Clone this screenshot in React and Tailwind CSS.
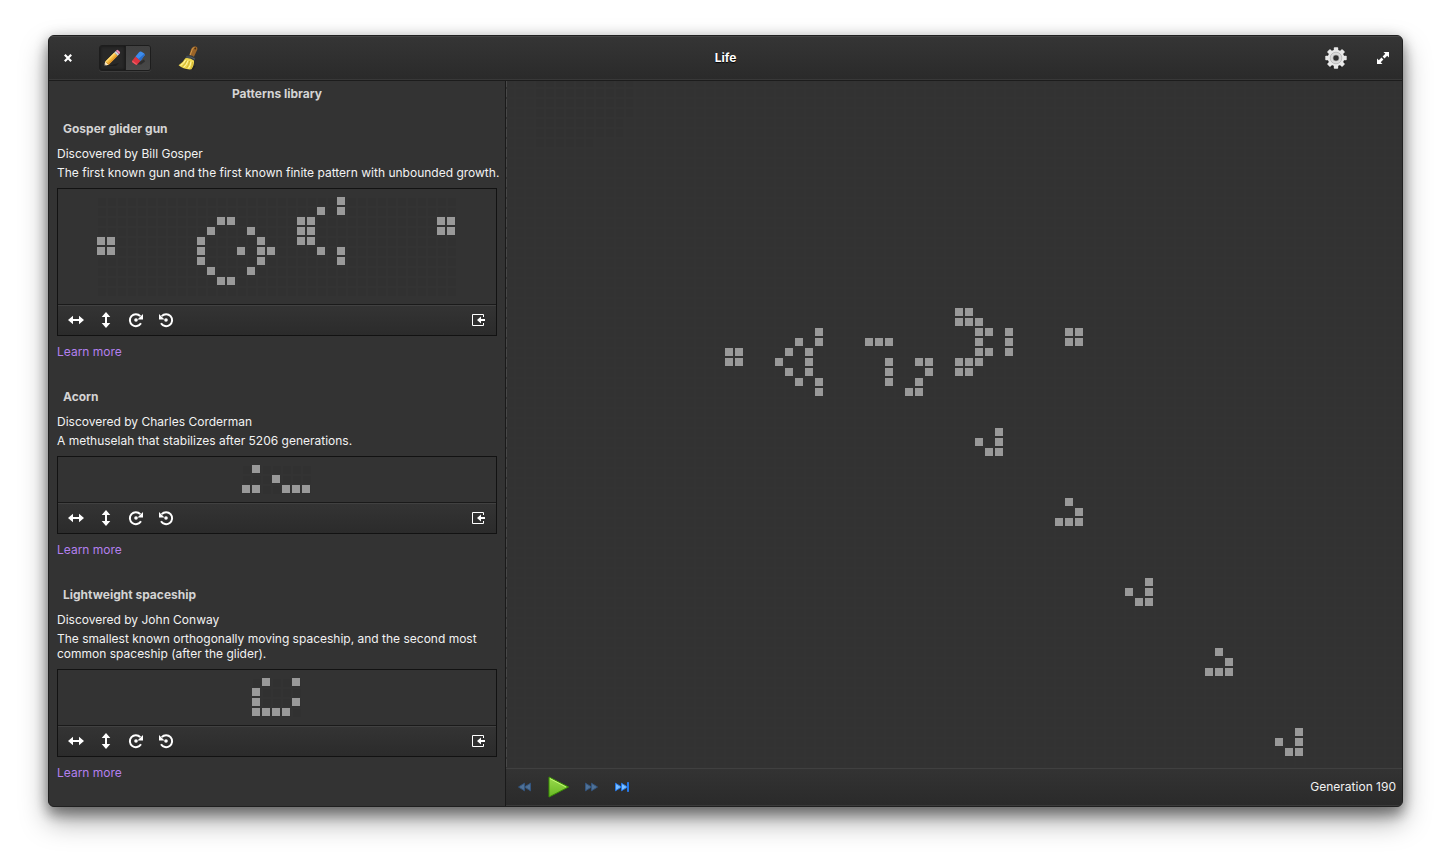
import { useState } from "react";

const CELL = 10;

const patterns = [
  {
    name: "Gosper glider gun",
    author: "Bill Gosper",
    text: "The first known gun and the first known finite pattern with unbounded growth.",
    cols: 36,
    cells: [
      [24],
      [22, 24],
      [12, 13, 20, 21, 34, 35],
      [11, 15, 20, 21, 34, 35],
      [0, 1, 10, 16, 20, 21],
      [0, 1, 10, 14, 16, 17, 22, 24],
      [10, 16, 24],
      [11, 15],
      [12, 13],
      [],
    ],
  },
  {
    name: "Acorn",
    author: "Charles Corderman",
    text: "A methuselah that stabilizes after 5206 generations.",
    cols: 7,
    cells: [[1], [3], [0, 1, 4, 5, 6]],
  },
  {
    name: "Lightweight spaceship",
    author: "John Conway",
    text: "The smallest known orthogonally moving spaceship, and the second most common spaceship (after the glider).",
    cols: 5,
    cells: [[1, 4], [0], [0, 4], [0, 1, 2, 3]],
  },
];

// Live cells of the board: row number, then the columns that are alive.
const board = [
  [23, [45, 46]],
  [24, [45, 46, 47]],
  [25, [31, 47, 48, 50, 56, 57]],
  [26, [29, 31, 36, 37, 38, 47, 50, 56, 57]],
  [27, [22, 23, 28, 30, 47, 48, 50]],
  [28, [22, 23, 27, 30, 38, 41, 42, 45, 46, 47]],
  [29, [28, 30, 38, 42, 45, 46]],
  [30, [29, 31, 38, 41]],
  [31, [31, 40, 41]],
  [35, [49]],
  [36, [47, 49]],
  [37, [48, 49]],
  [42, [56]],
  [43, [57]],
  [44, [55, 56, 57]],
  [50, [64]],
  [51, [62, 64]],
  [52, [63, 64]],
  [57, [71]],
  [58, [72]],
  [59, [70, 71, 72]],
  [65, [79]],
  [66, [77, 79]],
  [67, [78, 79]],
];

function Preview({ cols, cells }) {
  const width = cols * CELL;
  const height = cells.length * CELL;
  return (
    <svg width={width} height={height} viewBox={`0 0 ${width} ${height}`} className="block" aria-hidden="true">
      {cells.map((row, y) =>
        Array.from({ length: cols }, (_, x) => (
          <rect key={`${x}-${y}`} x={x * CELL + 1} y={y * CELL + 1} width="8" height="8" fill="#313131" />
        ))
      )}
      {cells.map((row, y) =>
        row.map((x) => <rect key={`${x}-${y}`} x={x * CELL} y={y * CELL} width="8" height="8" fill="#999999" />)
      )}
    </svg>
  );
}

function Board() {
  return (
    <svg className="block min-h-0 min-w-0 flex-1" aria-label="Board" role="img">
      <defs>
        <pattern id="grid" x="-1" y="-3" width="10" height="10" patternUnits="userSpaceOnUse">
          <rect x="1" y="1" width="8" height="8" fill="#323232" />
        </pattern>
        <pattern id="trail" x="-1" y="-3" width="10" height="10" patternUnits="userSpaceOnUse">
          <rect x="1" y="1" width="8" height="8" fill="#313131" />
        </pattern>
        <pattern id="edge" x="0" y="-3" width="10" height="10" patternUnits="userSpaceOnUse">
          <rect x="0" y="1" width="1" height="8" fill="#484848" />
        </pattern>
      </defs>
      <rect width="100%" height="100%" fill="url(#grid)" />
      <path d="M29 0h98v37h-10v20h-30v10H29z" fill="url(#trail)" />
      <rect width="1" height="100%" fill="url(#edge)" />
      {board.map(([y, row]) =>
        row.map((x) => (
          <rect key={`${x}-${y}`} x={x * CELL - 1} y={y * CELL - 3} width="8" height="8" fill="#999999" />
        ))
      )}
    </svg>
  );
}

function FlipHorizontalIcon() {
  return (
    <svg width="16" height="16" viewBox="0 0 16 16" fill="#fff" aria-hidden="true">
      <path d="M0 8l5-4.300V7h6V3.700L16 8l-5 4.300V9H5v3.300z" />
    </svg>
  );
}

function FlipVerticalIcon() {
  return (
    <svg width="16" height="16" viewBox="0 0 16 16" fill="#fff" aria-hidden="true">
      <path d="M8 0l4.300 5H9v6h3.300L8 16l-4.300-5H7V5H3.700z" />
    </svg>
  );
}

function RotateIcon({ flipped }) {
  return (
    <svg width="16" height="16" viewBox="0 0 16 16" aria-hidden="true">
      <g transform={flipped ? "translate(16 0) scale(-1 1)" : undefined}>
        <path d="M12.300 4.100A6 6 0 1 0 13 11.300" fill="none" stroke="#fff" strokeWidth="2" />
        <path d="M15 2v5.500H9.500z" fill="#fff" />
        <circle cx="8" cy="8" r="1.800" fill="#fff" />
      </g>
    </svg>
  );
}

function InsertIcon() {
  return (
    <svg width="16" height="16" viewBox="0 0 16 16" aria-hidden="true">
      <path d="M13.500 5V2.500h-11v11h11V11" fill="none" stroke="#fff" />
      <path d="M7 8l4-3.500V7h4v2h-4v2.500z" fill="#fff" />
    </svg>
  );
}

function PencilIcon() {
  return (
    <svg width="24" height="24" viewBox="0 0 24 24" aria-hidden="true">
      <path d="M7 20l12-3-3 3z" fill="#111" opacity=".5" />
      <path d="M4 20l1.300-4.600 3.300 3.300z" fill="#fbe6bd" />
      <path d="M4 20l.6-1.900 1.400 1.400z" fill="#2b2b2b" />
      <path d="M5.300 15.400L14.300 6.400l3.300 3.300-9 9z" fill="#f7b83a" />
      <path d="M5.300 15.400l9-9 1.100 1.100-9 9z" fill="#ffd974" />
      <path d="M7.600 17.700l9-9 1 1-9 9z" fill="#e0962a" />
      <path d="M14.300 6.400l1.500-1.500 3.300 3.300-1.500 1.500z" fill="#cfd3d6" />
      <path d="M15.800 4.900l.7-.7q.9-.7 1.700 0l1.600 1.600q.7.900 0 1.700l-.7.700z" fill="#f08bb0" />
    </svg>
  );
}

function EraserIcon() {
  return (
    <svg width="24" height="24" viewBox="0 0 24 24" aria-hidden="true">
      <path d="M9 18.500l9-5 1 2-4 3z" fill="#161616" opacity=".5" />
      <path d="M9.500 10.500l5 4.200-2.800 3.400q-1 .9-2 .3l-3-1.900q-1-.9-.3-2.100z" fill="#dd3440" />
      <path d="M9.500 10.500l3.500-4.300q1-1 2-.6l3 1.700q1 .8.500 2l-4 5.400z" fill="#3d8dee" />
      <path d="M12.500 12.900l2 1.800 4-5.400q.2-.9-.2-1.500z" fill="#2a6dcb" />
      <path d="M6.400 14.400l5 3.900q-1 .7-1.700.1l-3-1.900q-.9-.9-.3-2.100z" fill="#f05a62" />
    </svg>
  );
}

function BroomIcon() {
  return (
    <svg width="24" height="24" viewBox="0 0 24 24" aria-hidden="true">
      <path d="M8 23.500l12-4-3 4z" fill="#111" opacity=".4" />
      <path d="M12.800 10.500l2.500-7.700Q16.500.2 19 .2q3 .6 2.300 3.300l-3.800 8.300z" fill="#9a6428" />
      <path d="M14 9.500l2.400-6.500q.8-1.500 2.200-1.500" fill="none" stroke="#d49b4c" />
      <circle cx="19.200" cy="2.500" r=".9" fill="#4b2c0d" />
      <path d="M9.500 12q4-2 8.500 2 .3 5.500-2.500 9.300Q8 24 2.600 19.300q4.400-2.800 6.900-7.300z" fill="#f0d850" />
      <path d="M9.500 14q-1.500 3.500-5 5.500M12 14.500q-1 4-4.300 6.800M15 15.500q-.3 4-2.700 7" fill="none" stroke="#fff6a8" />
      <path d="M10.800 14.500q-1.500 3.500-4.500 6M13.600 15q-.6 4-3.200 7.200M16.500 16q0 4-1.700 7" fill="none" stroke="#b99a20" strokeWidth=".6" />
      <path d="M10.500 9.500q5-1.500 9 2.500l-1.300 2.800q-4.200-3.500-9.200-2.600z" fill="#343a40" />
      <path d="M10.300 11q5-1 8.700 2.200" fill="none" stroke="#69727b" strokeWidth=".7" />
    </svg>
  );
}

function GearIcon() {
  return (
    <svg width="24" height="24" viewBox="0 0 24 24" aria-hidden="true">
      <circle cx="12" cy="13" r="10" fill="#111" opacity=".5" />
      <g fill="#e8e8e8">
        {[0, 45, 90, 135].map((angle) => (
          <rect key={angle} x="9.800" y="1.300" width="4.400" height="21.400" rx=".8" transform={`rotate(${angle} 12 12)`} />
        ))}
        <circle cx="12" cy="12" r="8.300" />
      </g>
      <circle cx="12" cy="12" r="5.800" fill="#dadada" stroke="#bdbdbd" />
      <circle cx="12" cy="12" r="3" fill="#303030" stroke="#a5a5a5" strokeWidth=".6" />
    </svg>
  );
}

function SeekIcon({ flipped, bright, bar }) {
  return (
    <svg width="16" height="16" viewBox="0 0 16 16" aria-hidden="true">
      <g
        transform={flipped ? "translate(16 0) scale(-1 1)" : undefined}
        fill={bright ? "#78bdff" : "#4f7196"}
        stroke={bright ? "#2478ea" : "#33557f"}
      >
        <path d="M1.500 4.200L7.500 8l-6 3.800zM7.500 4.200L13.500 8l-6 3.800z" />
        {bar && <path d="M13.500 3.500h1v9h-1z" />}
      </g>
    </svg>
  );
}

function PlayIcon() {
  return (
    <svg width="24" height="24" viewBox="0 0 24 24" aria-hidden="true">
      <defs>
        <linearGradient id="play" x1="0" y1="0" x2="0" y2="1">
          <stop offset="0" stopColor="#9bdb4d" />
          <stop offset="1" stopColor="#68b723" />
        </linearGradient>
      </defs>
      <path d="M3 2L22.500 12 3 22z" fill="url(#play)" stroke="#3a9104" strokeLinejoin="round" />
      <path d="M4 3.600L20 12" fill="none" stroke="#d1ff82" opacity=".8" />
    </svg>
  );
}

const toolButton = "flex size-[30px] items-center justify-center";
const headButton = "flex size-8 items-center justify-center";

function PatternCard({ pattern }) {
  return (
    <section>
      <h3 className="pl-1.5 font-bold text-[#d4d4d4]">{pattern.name}</h3>
      <p className="mt-2.5">Discovered by {pattern.author}</p>
      <p className="mt-1 -mr-2">{pattern.text}</p>
      <div className="mt-2 border border-[#121212]">
        <div className="flex justify-center pt-2 pb-[7px]">
          <Preview cols={pattern.cols} cells={pattern.cells} />
        </div>
        <div className="border-t border-[#1a1a1a]">
          <div className="flex h-[30px] items-center bg-linear-to-b from-[#343434] to-[#2b2b2b] px-[3px] shadow-[inset_0_1px_0_#414141]">
            <button type="button" aria-label="Flip horizontally" className={toolButton}><FlipHorizontalIcon /></button>
            <button type="button" aria-label="Flip vertically" className={toolButton}><FlipVerticalIcon /></button>
            <button type="button" aria-label="Rotate clockwise" className={toolButton}><RotateIcon /></button>
            <button type="button" aria-label="Rotate counter-clockwise" className={toolButton}><RotateIcon flipped /></button>
            <button type="button" aria-label="Insert pattern" className={`${toolButton} ml-auto`}><InsertIcon /></button>
          </div>
        </div>
      </div>
      <a href="#learn" className="mt-2 block w-fit text-[#b380ee]">Learn more</a>
    </section>
  );
}

export default function App() {
  const [tool, setTool] = useState("pencil");
  const pressed = "bg-[#282828] shadow-[inset_0_0_3px_#111111]";
  const raised = "bg-linear-to-b from-[#404040] to-[#484848]";
  return (
    <div className="flex min-h-screen flex-col bg-white px-12 pt-[35px] pb-[61px] font-['Inter',sans-serif] text-[12px] leading-[15px] text-[#f2f2f2]">
      <div className="flex flex-1 flex-col overflow-hidden rounded-[6px] border border-[#202020] bg-[#333333] shadow-[0_3px_14px_rgba(0,0,0,0.3),0_14px_28px_rgba(0,0,0,0.35),0_10px_12px_rgba(0,0,0,0.2)]">
        <header className="grid h-[45px] grid-cols-[1fr_auto_1fr] items-center border-b border-[#1c1c1c] bg-linear-to-b from-[#353535] to-[#2a2a2a] px-[3px] shadow-[inset_0_1px_0_#454545,inset_0_-1px_0_#383838]">
          <div className="flex items-center">
            <button type="button" aria-label="Close" className={headButton}>
              <svg width="16" height="16" viewBox="0 0 16 16" aria-hidden="true">
                <path d="M4.800 4.800l6.400 6.400M11.200 4.800l-6.400 6.400" stroke="#fff" strokeWidth="2.200" />
              </svg>
            </button>
            <div className="ml-[15px] flex h-[26px] w-[52px] overflow-hidden rounded-[3px] border border-[#1d1d1d] shadow-[0_1px_0_#3c3c3c]">
              <button
                type="button"
                aria-label="Pencil"
                aria-pressed={tool === "pencil"}
                onClick={() => setTool("pencil")}
                className={`flex flex-1 items-center justify-center ${tool === "pencil" ? pressed : raised}`}
              >
                <PencilIcon />
              </button>
              <button
                type="button"
                aria-label="Eraser"
                aria-pressed={tool === "eraser"}
                onClick={() => setTool("eraser")}
                className={`flex flex-1 items-center justify-center border-l border-[#1d1d1d] ${tool === "eraser" ? pressed : raised}`}
              >
                <EraserIcon />
              </button>
            </div>
            <button type="button" aria-label="Clear board" className={`${headButton} ml-[21px]`}><BroomIcon /></button>
          </div>
          <h1 className="pb-0.5 font-bold text-white [text-shadow:0_1px_1px_#000000]">Life</h1>
          <div className="flex items-center justify-end gap-[15px]">
            <button type="button" aria-label="Settings" className={headButton}><GearIcon /></button>
            <button type="button" aria-label="Maximize" className={headButton}>
              <svg width="16" height="16" viewBox="0 0 16 16" fill="#fff" aria-hidden="true">
                <path d="M8.500 2H14v5.500l-1.800-1.800-2.700 2.700-1.900-1.900 2.700-2.700zM2 8.500l1.800 1.800 2.700-2.700 1.900 1.900-2.700 2.700L7.500 14H2z" />
              </svg>
            </button>
          </div>
        </header>
        <div className="flex min-h-0 flex-1">
          <aside className="w-[457px] shrink-0 border-r border-[#1a1a1a] px-2 pt-[5px] pb-5">
            <h2 className="text-center font-bold text-[#d4d4d4]">Patterns library</h2>
            <div className="mt-5 flex flex-col gap-[30px]">
              {patterns.map((pattern) => (
                <PatternCard key={pattern.name} pattern={pattern} />
              ))}
            </div>
          </aside>
          <main className="flex min-w-0 flex-1 flex-col">
            <div className="flex min-h-0 flex-1">
              <Board />
            </div>
            <footer className="flex h-[38px] items-center border-t border-[#404040] bg-linear-to-b from-[#333333] to-[#2a2a2a] pr-1.5 pb-0.5 pl-[3px] shadow-[inset_0_-1px_0_#3a3a3a]">
              <div className="flex items-center">
                <button type="button" aria-label="Slower" className={toolButton}><SeekIcon flipped /></button>
                <button type="button" aria-label="Play" className="flex h-8 w-[38px] items-center justify-center"><PlayIcon /></button>
                <button type="button" aria-label="Faster" className={toolButton}><SeekIcon /></button>
                <button type="button" aria-label="Step forward" className={toolButton}><SeekIcon bright bar /></button>
              </div>
              <p className="ml-auto">Generation 190</p>
            </footer>
          </main>
        </div>
      </div>
    </div>
  );
}
